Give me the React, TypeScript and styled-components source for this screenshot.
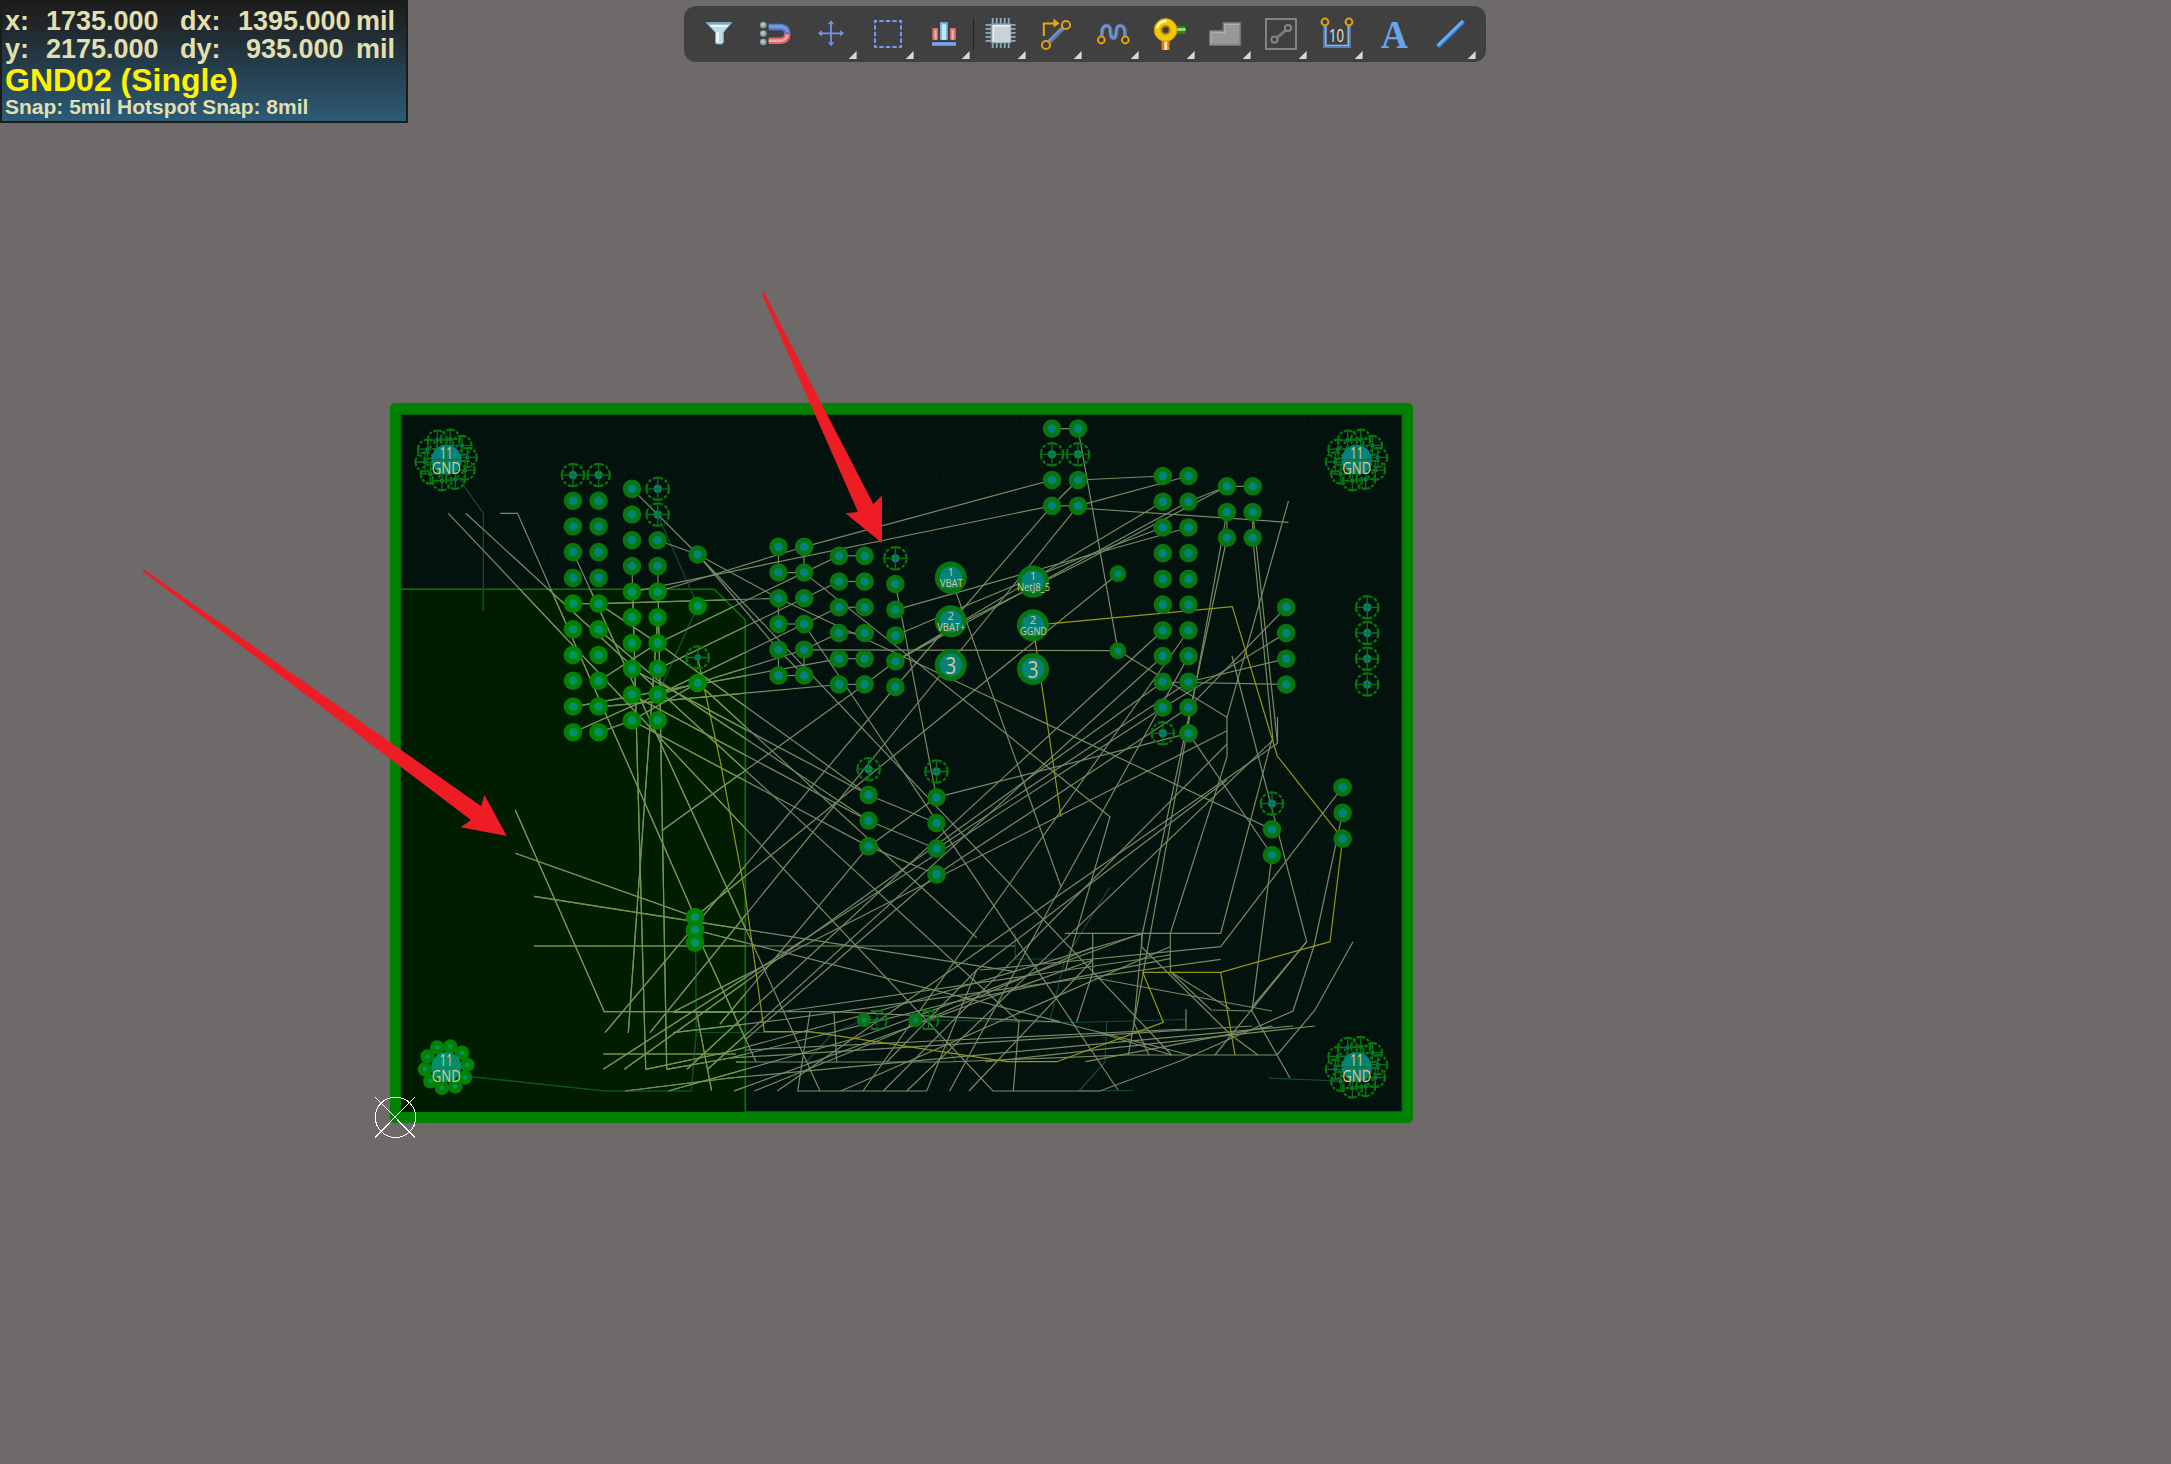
import React from 'react';
import styled, { createGlobalStyle } from 'styled-components';

const GlobalStyle = createGlobalStyle`
  html, body { margin: 0; padding: 0; background: #6e6a69; overflow: hidden; }
  * { box-sizing: border-box; }
`;

const Workspace = styled.main`
  position: relative;
  width: 2171px;
  height: 1464px;
  background: #6e6a69;
  font-family: "Liberation Sans", Arial, sans-serif;
`;

const Canvas = styled.svg`
  display: block;
  width: 2171px;
  height: 1464px;
`;

const HeadsUp = styled.section`
  position: absolute;
  top: 0;
  left: 0;
  width: 408px;
  height: 123px;
  padding: 6px 0 0 3px;
  border: 2px solid #1b1b1a;
  border-top-width: 1px;
  background: linear-gradient(#1c1c1b 0%, #1f2529 18%, #2d5b76 100%);
  color: #e2dfb0;
  font-weight: bold;
  white-space: pre;
`;

const Readout = styled.div`
  display: grid;
  grid-template-columns: 41px 134px 58px 118px 1fr;
  height: 28px;
  font-size: 27px;
  line-height: 28px;
`;

const Delta = styled.span<{ $inset?: number }>`
  padding-left: ${(p) => p.$inset ?? 0}px;
`;

const LayerName = styled.div`
  height: 33px;
  color: #fff200;
  font-size: 32px;
  line-height: 34px;
`;

const SnapInfo = styled.div`
  font-size: 21px;
  line-height: 22px;
`;

const Toolbar = styled.nav`
  position: absolute;
  top: 6px;
  left: 684px;
  display: flex;
  width: 802px;
  height: 56px;
  padding: 0 8px 0 7px;
  border-radius: 12px;
  background: #404040;
`;

const ToolButton = styled.button<{ $divided?: boolean }>`
  flex: 1 1 0;
  min-width: 0;
  height: 56px;
  padding: 0;
  border: 0;
  background: ${(p) =>
    p.$divided ? 'linear-gradient(#232323, #232323) 1px 12px / 1px 32px no-repeat' : 'none'};
`;

const Glyph = styled.svg`
  display: block;
  width: 56px;
  height: 56px;
`;

/* ---------- toolbar ---------- */

const Ring = ({ x, y, r = 3.4, c = '#e3a012' }: { x: number; y: number; r?: number; c?: string }) => (
  <circle cx={x} cy={y} r={r} fill="none" stroke={c} strokeWidth="2" />
);

const pinSteps = [-8, -4, 0, 4, 8];

const tools: { name: string; menu?: boolean; divided?: boolean; art: React.ReactNode }[] = [
  {
    name: 'Filter',
    art: (
      <>
        <path d="M15 16H41L32.7 26V36.5L31 38H25.5L24 36.5V26Z" fill="#c0dde6" />
        <path d="M15 16H41L39.5 18.5H16.5Z" fill="#7fa9bf" />
        <path d="M18 19H38L36 21H20Z" fill="#e9f6f8" />
        <path d="M15.5 17L24.5 26.5V37L26 38H31L32.2 36.5V26.5L40.5 17" fill="none" stroke="#7fa6b8" />
        <path d="M26.5 26V36.5" stroke="#eefafb" strokeWidth="2.5" />
      </>
    ),
  },
  {
    name: 'Snapping',
    art: (
      <>
        {[19, 27.5, 36].map((y) => (
          <g key={y}>
            <circle cx="16.3" cy={y} r="3.3" fill="#86a4a4" />
            <circle cx="16" cy={y - 0.4} r="1.6" fill="#b9cfce" />
          </g>
        ))}
        <path d="M21.7 21H34Q40.3 21.5 40.3 27.8" fill="none" stroke="#4f7fc4" strokeWidth="6.4" />
        <path d="M21.7 34.8H34Q40.3 34 40.3 27.4" fill="none" stroke="#d96b6e" strokeWidth="6.4" />
        <path d="M21.7 20.5H34Q39 21 40.5 26" fill="none" stroke="#7f9be6" strokeWidth="2.4" />
        <path d="M21.7 34.8H34Q39 34 40.5 29" fill="none" stroke="#fba4a6" strokeWidth="2.4" />
      </>
    ),
  },
  {
    name: 'Move',
    menu: true,
    art: (
      <g stroke="#7193e6" strokeWidth="1.8" fill="none">
        <path d="M17 27.3H39M28 16.5V38.5" />
        <path d="M15 27.3l4-3.2v6.4zM41 27.3l-4-3.2v6.4zM28 14.3l-3.2 4h6.4zM28 40.3l-3.2-4h6.4z" fill="#7193e6" stroke="none" />
      </g>
    ),
  },
  {
    name: 'Selection',
    menu: true,
    art: (
      <rect x="15" y="15" width="26" height="26" fill="none" stroke="#7795ee" strokeWidth="2" strokeDasharray="4.4 2.1" strokeDashoffset="2.2" />
    ),
  },
  {
    name: 'Align',
    menu: true,
    art: (
      <>
        <rect x="16.3" y="22" width="5.6" height="11.8" fill="#d96f72" />
        <rect x="34" y="22" width="5.8" height="11.8" fill="#d96f72" />
        <rect x="18.4" y="24" width="2.2" height="9.8" fill="#f8aaa8" />
        <rect x="35.7" y="24" width="2.2" height="9.8" fill="#f8aaa8" />
        <rect x="24" y="16.2" width="7.8" height="17.6" fill="#78b8e0" />
        <rect x="26" y="18.2" width="4" height="15.6" fill="#c6e8fa" />
        <rect x="16" y="36" width="24" height="4" fill="#6a90d8" />
        <rect x="16" y="37" width="24" height="1.4" fill="#8baaf0" />
      </>
    ),
  },
  {
    name: 'Component',
    menu: true,
    divided: true,
    art: (
      <>
        {pinSteps.map((s) => (
          <g key={s} fill="#8da9b8">
            <rect x={27.8 + s} y="12" width="1.8" height="30" />
            <rect x="13.6" y={26 + s} width="30" height="1.8" />
          </g>
        ))}
        <rect x="18.6" y="17.3" width="20.6" height="20" rx="1" fill="#7f9cab" />
        <rect x="20.3" y="18.8" width="18" height="17.4" fill="#e9edf0" />
        <rect x="22" y="20.5" width="16.3" height="15.7" fill="#c9d2d8" />
      </>
    ),
  },
  {
    name: 'Route',
    menu: true,
    art: (
      <>
        <path d="M35 22L21 36" stroke="#5f7ca8" strokeWidth="4.6" />
        <path d="M34.5 21.5L20.5 35.5" stroke="#7c9cd0" strokeWidth="1.3" />
        <Ring x={38} y={19} r={4.1} />
        <Ring x={18} y={39} r={4.1} />
        <path d="M15.8 30V17.4H27" fill="none" stroke="#eba70f" strokeWidth="2" />
        <path d="M25.5 12.6L31.5 17.4L25.5 21.5Z" fill="#eba70f" />
      </>
    ),
  },
  {
    name: 'Length tuning',
    menu: true,
    art: (
      <>
        <path d="M17 30C16 17 25.5 17 25.5 25C25.5 34.5 31.5 34.5 31.5 25C31.5 17 41 17 40 30" fill="none" stroke="#5c7dab" strokeWidth="4" />
        <path d="M16.6 29C16 17.5 25 17.5 25 25C25 34 31 34 31 25C31 17.5 40.4 17.5 39.6 29" fill="none" stroke="#7e9fd4" strokeWidth="1.3" />
        <Ring x={16.3} y={34} />
        <Ring x={40.3} y={34} />
      </>
    ),
  },
  {
    name: 'Via',
    menu: true,
    art: (
      <>
        <rect x="35.6" y="20" width="9" height="7.8" fill="#348709" />
        <rect x="35.6" y="22" width="9" height="3" fill="#8fda79" />
        <rect x="20.6" y="34" width="8" height="10" fill="#dd7f15" />
        <rect x="23.4" y="34" width="2.8" height="10" fill="#ffe1b8" />
        <circle cx="24.6" cy="24" r="11.4" fill="#f2c806" stroke="#c99b0b" />
        <path d="M16 22A9 9 0 0 1 25.6 15" fill="none" stroke="#fff7b4" strokeWidth="2.4" />
        <circle cx="24.6" cy="24" r="4" fill="#3a3a3a" stroke="#a98209" strokeWidth="2" />
      </>
    ),
  },
  {
    name: 'Polygon pour',
    menu: true,
    art: (
      <>
        <path d="M12.7 39.3V24.8H26.3V16.8H43.4V39.3Z" fill="#989898" stroke="#737373" strokeWidth="1.5" />
        <path d="M14.3 38V26.5H28V18.3H42" fill="none" stroke="#b0b0b0" strokeWidth="1.3" />
      </>
    ),
  },
  {
    name: 'Room',
    menu: true,
    art: (
      <>
        <rect x="13" y="13" width="30" height="30" fill="none" stroke="#8b8b8b" strokeWidth="1.8" />
        <path d="M32.5 24.5L23.5 32" stroke="#777" strokeWidth="3" />
        <Ring x={35} y={22} r={3.1} c="#858585" />
        <Ring x={21.4} y={33.6} r={3.1} c="#858585" />
      </>
    ),
  },
  {
    name: 'Dimension',
    menu: true,
    art: (
      <>
        <path d="M16 20V40.2H40V20" fill="none" stroke="#5683b6" strokeWidth="3.6" />
        <path d="M16.8 20V39.5H39.4V20" fill="none" stroke="#9cb5dc" strokeWidth="1.2" />
        <Ring x={16} y={16} />
        <Ring x={40} y={16} />
        <text x="27.4" y="35.8" textAnchor="middle" textLength="15" lengthAdjust="spacingAndGlyphs" fontFamily="'Open Sans', sans-serif" fontWeight="400" fontSize="18.5" fill="#e4e4e4">10</text>
      </>
    ),
  },
  {
    name: 'Text',
    art: (
      <text x="28.6" y="41.7" textAnchor="middle" textLength="27" lengthAdjust="spacingAndGlyphs" fontFamily="'Liberation Serif', serif" fontWeight="bold" fontSize="41" fill="#69a5e9">A</text>
    ),
  },
  {
    name: 'Line',
    menu: true,
    art: (
      <>
        <path d="M15.7 40.3L41.3 15.3" stroke="#3e83cd" strokeWidth="4.6" />
        <path d="M15.5 39.8L41 14.8" stroke="#6fb4f6" strokeWidth="2.2" />
      </>
    ),
  },
];

/* ---------- board data ---------- */

type Pt = [number, number];
const P = 25.72;
const column = (x: number, y: number, from: number, to: number): Pt[] =>
  Array.from({ length: to - from + 1 }, (_, i) => [x, y + (from - 1 + i) * P]);

const pads: Pt[] = [
  ...column(573, 475, 2, 11),
  ...column(598.6, 475, 2, 11),
  ...column(632, 488.8, 1, 10),
  ...column(657.7, 488.8, 3, 10),
  [697.7, 554.5], [697.7, 606], [697.7, 683],
  ...column(778.5, 546.8, 1, 6),
  ...column(804.2, 546.8, 1, 6),
  ...column(839, 555.8, 1, 6),
  ...column(864.6, 555.8, 1, 6),
  ...column(895.4, 558.3, 2, 6),
  [1052, 428.6], [1052, 480], [1052, 505.8],
  [1078, 428.6], [1078, 480], [1078, 505.8],
  ...column(1162.8, 476, 1, 10),
  ...column(1188.5, 476, 1, 11),
  ...column(1227, 486.3, 1, 3),
  ...column(1252.7, 486.3, 1, 3),
  ...column(1286.2, 607.3, 1, 4),
  ...column(868.6, 769.2, 2, 4),
  ...column(936.5, 771.5, 2, 5),
  ...column(1272, 803.6, 2, 3),
  ...column(1342.6, 787.2, 1, 3),
  [695, 917], [695, 930], [695, 942.7],
];
const viaPads: Pt[] = [[1117.9, 573.7], [1117.9, 650.8]];

const reliefs: Pt[] = [
  [573, 475], [598.6, 475], [657.7, 488.8], [657.7, 514.5], [697.7, 657.5],
  [895.4, 558.3], [1052, 454.3], [1078, 454.3], [1162.8, 733.3],
  ...column(1367.2, 607.3, 1, 4),
  [868.6, 769.2], [936.5, 771.5], [1272, 803.6],
];

const bigPads: { x: number; y: number; n: string; net?: string; w?: number }[] = [
  { x: 950.8, y: 577.6, n: '1', net: 'VBAT', w: 23 },
  { x: 950.8, y: 621.3, n: '2', net: 'VBAT+', w: 28 },
  { x: 950.8, y: 665, n: '3' },
  { x: 1033, y: 581.6, n: '1', net: 'NetJ8_5', w: 33 },
  { x: 1033, y: 625.3, n: '2', net: 'GGND', w: 27 },
  { x: 1033, y: 669, n: '3' },
];

const viaRing: Pt[] = [
  [4, -20.5], [15.7, -14.3], [21, -2.3], [18.7, 10.5], [9, 19.5],
  [-4.3, 21], [-16, 14.3], [-21.3, 2.3], [-18.7, -10.5], [-9, -19.6],
];

const nets: number[][] = [
  [448.3, 513.3, 993, 1091, 1100, 1091, 1180, 1061, 1293, 1011, 1314, 946, 1342.6, 812.8],
  [465.7, 513.3, 1019, 1021.7, 1013.3, 1091],
  [500, 513.3, 517.5, 513.3, 695, 917],
  [573, 552, 820, 1091],
  [573, 603.7, 598.6, 603.7, 778.5, 598.3],
  [598.6, 603.7, 657.7, 643.3, 868.6, 795],
  [632, 488.8, 697.7, 554.5], [657.7, 540.3, 697.7, 554.5],
  [697.7, 554.5, 778.5, 598.3], [697.7, 554.5, 1171.7, 1055], [697.7, 554.5, 778.5, 649.8],
  [657.7, 591.8, 804, 546.8, 1052, 480], [632, 591.8, 1052, 505.8],
  [632, 566, 645.7, 1069.3], [657.7, 566, 666.7, 1069.3], [657.7, 617.6, 628.3, 1032.7],
  [661.7, 830.7, 864.6, 684.5, 895.4, 661.3],
  [598.6, 681, 657.7, 643.3, 804, 572.6], [657.7, 669, 804, 598.3], [657.7, 694.8, 804, 624],
  [573, 706.8, 839, 658.8], [598.6, 706.8, 839, 684.5],
  [573, 732.5, 657.7, 694.8, 697.7, 683], [598.6, 732.5, 632, 720.5, 697.7, 683, 804, 649.8],
  [697.7, 683, 976.7, 937.7],
  [632, 669, 868.6, 795], [632, 694.8, 868.6, 820.7], [632, 720.5, 868.6, 846.4],
  [598.6, 629.5, 657.7, 680, 868.6, 820.7],
  [804, 572.6, 839, 555.8], [804, 598.3, 839, 581.5], [804, 624, 839, 607.3], [804, 649.8, 839, 633],
  ...[0, 1, 2, 3, 4, 5].map((i) => [839, 555.8 + i * P, 864.6, 555.8 + i * P]),
  [778.5, 572.6, 804, 572.6], [778.5, 624, 804, 624], [778.5, 675.5, 804, 675.5],
  [778.5, 546.8, 778.5, 572.6], [804, 546.8, 804, 572.6], [778.5, 598.3, 778.5, 624],
  [778.5, 649.8, 778.5, 675.5], [804, 649.8, 804, 675.5], [778.5, 649.8, 804, 675.5],
  [804, 572.6, 1110, 816.7, 1065, 971.7],
  [950.8, 577.6, 1061, 886.7, 949.7, 1091], [1188.5, 656.3, 1061, 886.7],
  [804, 624, 1118, 1090], [778.5, 598.3, 1272, 829.4],
  [895.4, 584, 936.5, 797.3],
  [895.4, 609.8, 1083, 557, 1188.5, 527.5], [895.4, 635.5, 950.8, 612, 1083, 557, 1162.8, 527.5],
  [895.4, 661.3, 1188.5, 501.8], [895.4, 661.3, 1162.8, 501.8], [895.4, 661.3, 963, 622, 1083, 562, 1227, 486.3],
  [895.4, 687, 1052, 505.8],
  [1078, 480, 1052, 505.8], [1078, 505.8, 650, 1032.7], [895.4, 687, 605, 1032.7],
  [1118, 573.7, 695, 917], [804, 649.8, 1118, 650.6],
  [1162.8, 630.5, 687, 1069.3], [1162.8, 656.3, 707.7, 1069.3], [1162.8, 682, 624.3, 1069.3],
  [1162.8, 707.8, 603.3, 1069.3], [1188.5, 630.5, 863, 1091],
  [1286.2, 607.3, 1188.5, 707.8], [1286.2, 633, 1162.8, 707.8], [1286.2, 658.8, 1188.5, 682],
  [1286.2, 684.5, 1162.8, 682],
  [1118, 650.6, 1227, 717.3, 1227, 756.7, 1170.3, 933.3, 1170.3, 971.7, 1230, 1009],
  [1227, 512, 1128.3, 1055], [1227, 537.8, 1142.5, 933, 1134, 1023, 1149, 1055],
  [1252.7, 512, 1277.5, 743.3, 777.3, 1091], [1252.7, 537.8, 1273, 740, 906.7, 1091],
  [1288.5, 501, 1227, 717.3], [1078, 508, 1288.5, 522.3],
  [1232, 656, 1306.7, 941.7, 1215, 1055], [1277.5, 717, 1277.5, 743],
  [1227, 730.7, 673, 1012], [1227, 744, 883.3, 1091],
  [1188.5, 733.3, 936.5, 797.3], [1188.5, 707.8, 936.5, 874.5], [1188.5, 682, 936.5, 848.8],
  [1188.5, 733.3, 1272, 855],
  [868.6, 846.4, 936.5, 797.3], [868.6, 795, 936.5, 823], [868.6, 820.7, 936.5, 848.8], [868.6, 846.4, 936.5, 874.5],
  [868.6, 846.4, 720, 1024], [936.5, 874.5, 745, 1040],
  [1052, 428.6, 1078, 428.6, 1118, 650.6], [1052, 505.8, 1078, 505.8],
  [1078, 480, 1162.8, 476], [1078, 505.8, 1188.5, 476], [1188.5, 501.8, 1227, 486.3, 1252.7, 486.3],
  [1227, 512, 1227, 537.8], [1252.7, 512, 1252.7, 537.8],
  [515.3, 853.3, 695, 917], [534, 896.3, 1015, 971.7], [695, 930, 1060, 1021.7], [534, 946, 1015, 946],
  [515.3, 810, 604.3, 1011.7, 834, 1011.7, 1060, 1022], [834, 1012, 836.7, 1062],
  [695, 930, 756, 1061.7], [696.7, 1013, 711.7, 1091],
  [603.3, 1054, 736, 1054], [736, 1062, 947, 1062, 1127, 1055, 1277, 1055],
  [673.3, 1012.3, 736, 1012.3],
  [1065, 933.3, 1220.7, 933.3, 1271.7, 740],
  [1342.6, 787.2, 1220.7, 946.7], [1220.7, 946.7, 980, 970],
  [1092.7, 933.3, 1092.7, 973, 1076.7, 1021.7],
  [673, 1032.7, 780, 1020, 1220.7, 959.3],
  [645.7, 1069.3, 730, 1051.5, 900, 1005, 1141.7, 934], [666.7, 1069.3, 730, 1058, 950, 1003, 1170, 958.7],
  [780, 1012, 1170, 955], [734, 1091, 1092.7, 960], [754.3, 1091, 880, 1040, 1092.7, 947],
  [841, 1091, 1170, 946.7],
  [625, 1091, 730, 1078, 1293, 1026], [668.3, 1091, 860, 1037, 1142, 933.3], [730, 1058, 1252, 1026],
  [745, 1050, 1186, 1029, 1186, 1009], [1085.7, 1061.7, 1272.5, 1026], [985, 1062, 1315, 1026],
  [1051, 1020, 1190, 1055], [1100, 1033, 1171, 1055],
  [1141.7, 933, 1141.7, 947, 1231, 1035, 1258, 1055], [1170.3, 971.7, 1211, 1010, 1252, 1011],
  [1095, 978, 1272, 1011], [1272, 855, 1252, 1011, 1290, 1078], [1306.7, 941.7, 1252, 1007],
  [1353, 941.7, 1315, 1010, 1277, 1055],
  [810, 1012, 797.7, 1091, 926.7, 1091, 976.7, 970], [969, 1091, 1092.7, 960],
  [886.7, 1062, 976.7, 970, 1227, 780],
];

const powerNets: number[][] = [
  [697.7, 657.5, 720, 760, 745, 893, 764.3, 1031.7, 810, 1031.7, 1006.7, 1061.7, 1056.7, 1061.7, 1163.3, 1022.3, 1142.7, 972.3, 1220.7, 972.3, 1330, 941.7, 1342.6, 838.7, 1277.3, 756, 1232.3, 606.7, 1033, 625.3, 1061, 816.7],
  [1220.7, 972.3, 1235, 1055],
];

const groundNets: number[][] = [
  [460, 480, 483.3, 513.3, 483.3, 611],
  [657.7, 514.5, 697.7, 606, 657.7, 694.8, 657.7, 720],
  [695.6, 943, 696.3, 1032, 691.3, 1091, 605, 1091, 446, 1074],
  [696, 1032.5, 834, 1032.5, 864, 1020, 877, 1020], [834, 1032, 806, 1062],
  [915.6, 1020, 1074, 1022.5, 1186, 1019.5], [928, 1020, 956, 1062],
  [1106.7, 1022, 1105, 1062, 1079, 1091, 1133, 1090.5],
  [1015, 933, 1015.5, 959, 1065, 959, 1110, 887], [1065, 959, 1050, 1020], [1269, 1078, 1337, 1081],
];

const POUR = '401,589 714.3,589 745.3,620 745.3,1112 401,1112';

const inPour = ([x, y]: Pt) => y > 589 && x < 745 && !(x > 714 && y - 589 < x - 714);

const Net = ({ pts, stroke }: { pts: number[]; stroke: string }) => (
  <polyline points={pts.join(' ')} fill="none" stroke={stroke} strokeWidth="1.2" />
);

const Pad = ({ at, r = 9.3, hole = 4.3 }: { at: Pt; r?: number; hole?: number }) => (
  <>
    <circle cx={at[0]} cy={at[1]} r={r} fill={inPour(at) ? '#028202' : '#07760f'} />
    <circle cx={at[0]} cy={at[1]} r={hole} fill={inPour(at) ? '#048f69' : '#06817c'} />
  </>
);

const Relief = ({ at, r = 11.2, hole = 4.2 }: { at: Pt; r?: number; hole?: number }) => {
  const unit = (2 * Math.PI * r) / 4;
  return (
    <g transform={`translate(${at[0]} ${at[1]})`} fill="none" stroke="#07760f">
      <circle r={hole} fill="#06817c" stroke="none" />
      <circle
        r={r}
        strokeWidth="2.2"
        strokeDasharray={`${unit * 0.6} ${unit * 0.1} ${unit * 0.2} ${unit * 0.1}`}
        strokeDashoffset={unit * 0.3}
      />
      <path d={`M${-r} 0H${r}M0 ${-r}V${r}`} strokeWidth="1.3" />
    </g>
  );
};

const HalfRelief = ({ x, y }: { x: number; y: number }) => (
  <g transform={`translate(${x} ${y})`} fill="none" stroke="#07760f" strokeWidth="2">
    <circle r="2.2" fill="#06817c" stroke="none" />
    <path d="M-5 -7V-9H5V-7M-5 7V9H5V7M7.5 -6Q9.5 -5 9.5 0T7.5 6" />
    <path d="M-8 0H10M0 -9V9" strokeWidth="1" />
  </g>
);

const MountingHole = ({ x, y, solid }: { x: number; y: number; solid?: boolean }) => (
  <g>
    {viaRing.map(([dx, dy], i) =>
      solid ? (
        <Pad key={i} at={[x + dx, y + dy]} r={7.2} hole={2.3} />
      ) : (
        <Relief key={i} at={[x + dx, y + dy]} r={9.6} hole={2.2} />
      ),
    )}
    <circle cx={x} cy={y} r="15" fill={solid ? '#048f69' : '#06817c'} />
    {!solid && <path d={`M${x - 15} ${y}H${x + 15}M${x} ${y - 15}V${y + 15}`} stroke="#07760f" />}
    <text fill="#d6cb83" textAnchor="middle" fontFamily="'Open Sans', sans-serif" fontSize="16">
      <tspan x={x} y={y - 0.7} textLength="13" lengthAdjust="spacingAndGlyphs">11</tspan>
      <tspan x={x} y={y + 14.5} textLength="29" lengthAdjust="spacingAndGlyphs">GND</tspan>
    </text>
  </g>
);

const Board = () => (
  <g>
    <defs>
      <pattern id="grid" x="403" y="417" width="6.13" height="6.13" patternUnits="userSpaceOnUse">
        <rect width="1" height="1" fill="#14322a" />
      </pattern>
      <clipPath id="pour"><polygon points={POUR} /></clipPath>
    </defs>
    <rect x="390" y="403" width="1023" height="720" rx="5" fill="#018101" />
    <rect x="401" y="414.5" width="1001" height="697" fill="#04120e" stroke="#07600b" />
    <polygon points={POUR} fill="#001d00" />
    <rect x="402" y="415" width="999" height="696" fill="url(#grid)" opacity="0.4" />
    <path d="M401 589.3H714.3L745.3 620V1112" fill="none" stroke="#067806" strokeWidth="1.6" />
    <g>
      {groundNets.map((n, i) => <Net key={i} pts={n} stroke="#174a3c" />)}
      {nets.map((n, i) => <Net key={i} pts={n} stroke="#7a8a66" />)}
      <g clipPath="url(#pour)">
        {groundNets.map((n, i) => <Net key={i} pts={n} stroke="#0d5129" />)}
        {nets.map((n, i) => <Net key={i} pts={n} stroke="#71954f" />)}
      </g>
      {powerNets.map((n, i) => <Net key={i} pts={n} stroke="#949a10" />)}
    </g>
    {pads.map((p, i) => <Pad key={i} at={p} />)}
    {viaPads.map((p, i) => <Pad key={i} at={p} r={8.4} hole={3.4} />)}
    {reliefs.map((p, i) => <Relief key={i} at={p} hole={i === 4 ? 3.3 : 4.2} />)}
    <Pad at={[864, 1020]} r={7.2} hole={2.3} />
    <Pad at={[915.6, 1020]} r={7.2} hole={2.3} />
    <HalfRelief x={877} y={1020} />
    <HalfRelief x={928.5} y={1020} />
    {bigPads.map((b, i) => (
      <g key={i} textAnchor="middle" fill="#d6cb83" fontFamily="'Open Sans', sans-serif">
        <circle cx={b.x} cy={b.y} r="16" fill="#07760f" />
        <circle cx={b.x} cy={b.y} r="11.2" fill="#06817c" />
        {b.net ? (
          <text fontSize="11.5">
            <tspan x={b.x} y={b.y - 1.3}>{b.n}</tspan>
            <tspan x={b.x + 0.5} y={b.y + 9.8} textLength={b.w} lengthAdjust="spacingAndGlyphs">{b.net}</tspan>
          </text>
        ) : (
          <text x={b.x} y={b.y + 9} fontSize="24" textLength="11" lengthAdjust="spacingAndGlyphs">{b.n}</text>
        )}
      </g>
    ))}
    <MountingHole x={446.3} y={459.7} />
    <MountingHole x={1356.7} y={459.7} />
    <MountingHole x={446.3} y={1067} solid />
    <MountingHole x={1356.7} y={1067} />
  </g>
);

const OriginMark = () => (
  <g fill="none" stroke="#fff" strokeWidth="1" shapeRendering="crispEdges">
    <circle cx="395.5" cy="1117.3" r="20.2" />
    <path d="M375 1097L415 1137.5M415 1097L375 1137.5" />
  </g>
);

const Arrows = () => (
  <g fill="#ee1d25">
    <path d="M144.2 569.6L481 806L484.5 795L506.8 836L460.8 827.2L471 820L142.8 571.6Q142.6 569.4 144.2 569.6Z" />
    <path d="M764.2 292.6L873.3 504L882 495.6V543L845.5 513.3L858 512L761.8 294Q762.4 291.8 764.2 292.6Z" />
  </g>
);

export default function App() {
  return (
    <>
      <GlobalStyle />
      <Workspace>
        <Canvas viewBox="0 0 2171 1464">
          <Board />
          <OriginMark />
          <Arrows />
        </Canvas>
        <HeadsUp>
          <Readout>
            <span>x:</span><span>1735.000</span><span>dx:</span><span>1395.000</span><span>mil</span>
          </Readout>
          <Readout>
            <span>y:</span><span>2175.000</span><span>dy:</span><Delta $inset={8}>935.000</Delta><span>mil</span>
          </Readout>
          <LayerName>GND02 (Single)</LayerName>
          <SnapInfo>Snap: 5mil Hotspot Snap: 8mil</SnapInfo>
        </HeadsUp>
        <Toolbar>
          {tools.map((t) => (
            <ToolButton key={t.name} aria-label={t.name} $divided={t.divided}>
              <Glyph viewBox="0 0 56 56">
                {t.art}
                {t.menu && <path d="M45.6 53H53.6V45Z" fill="#d8d8d8" />}
              </Glyph>
            </ToolButton>
          ))}
        </Toolbar>
      </Workspace>
    </>
  );
}
